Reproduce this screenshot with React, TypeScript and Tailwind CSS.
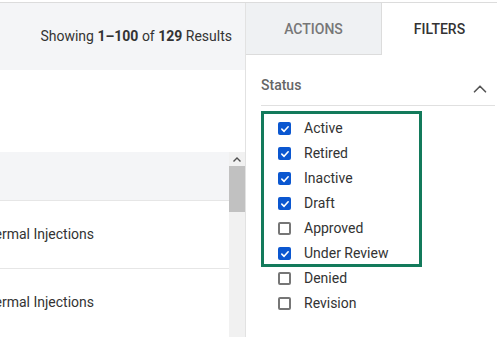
import { ChevronUp } from 'lucide-react';

const statuses = [
  { label: 'Active', checked: true },
  { label: 'Retired', checked: true },
  { label: 'Inactive', checked: true },
  { label: 'Draft', checked: true },
  { label: 'Approved', checked: false },
  { label: 'Under Review', checked: true },
];

const extraStatuses = [
  { label: 'Denied', checked: false },
  { label: 'Revision', checked: false },
];

function Checkbox({ checked }: { checked: boolean }) {
  if (checked) {
    return (
      <span className="flex h-[13px] w-[13px] items-center justify-center rounded-[2px] bg-[#0b57d0]">
        <svg viewBox="0 0 12 12" className="h-[10px] w-[10px]">
          <path d="M2.2 6.2 L4.9 8.8 L9.8 3.4" fill="none" stroke="#fff" strokeWidth="1.9" strokeLinecap="round" strokeLinejoin="round" />
        </svg>
      </span>
    );
  }
  return <span className="h-[13px] w-[13px] rounded-[2px] border-2 border-[#767676] bg-white" />;
}

function StatusRow({ label, checked }: { label: string; checked: boolean }) {
  return (
    <label className="flex h-[25px] items-center gap-[13px]">
      <Checkbox checked={checked} />
      <span className="text-[14px] text-[#333]">{label}</span>
    </label>
  );
}

export default function App() {
  return (
    <div className="flex h-[337px] w-[497px] overflow-hidden bg-white pt-[2px] font-['Roboto',sans-serif]">
      <div className="flex w-full border-t border-[#dcdcdc]">
        {/* Results */}
        <div className="flex w-[245px] flex-shrink-0 flex-col">
          <div className="flex h-[67px] items-center justify-end bg-[#f4f5f7] pr-[13px] text-[14px] text-[#333]">
            Showing&nbsp;<b className="font-bold">1–100</b>&nbsp;of&nbsp;<b className="font-bold">129</b>&nbsp;Results
          </div>
          <div className="h-[82px]" />
          <div className="flex flex-1">
            <div className="flex w-[229px] flex-col">
              <div className="h-[48px] bg-[#f4f5f7]" />
              {[0, 1].map((i) => (
                <div key={i} className="flex h-[68px] items-center border-t border-[#e6e6e6]">
                  <div className="flex w-[94px] justify-end overflow-hidden whitespace-nowrap text-[14px] text-[#333]">
                    Intradermal Injections
                  </div>
                </div>
              ))}
            </div>
            {/* Scrollbar */}
            <div className="flex w-[16px] flex-col bg-[#f1f1f1]">
              <div className="flex h-[14px] items-center justify-center">
                <svg viewBox="0 0 8 5" className="h-[5px] w-[8px]">
                  <path d="M0.5 4.5 L4 1 L7.5 4.5" fill="none" stroke="#505050" strokeWidth="1.4" />
                </svg>
              </div>
              <div className="h-[46px] bg-[#c1c1c1]" />
            </div>
          </div>
        </div>

        {/* Side panel */}
        <div className="flex flex-1 flex-col border-l border-[#e2e2e2]">
          <div className="flex h-[52px]">
            <div className="flex w-[136px] items-center justify-center border-b border-r border-[#dcdcdc] bg-[#eff1f3] pt-[1px] text-[14px] font-medium text-[#777]">
              ACTIONS
            </div>
            <div className="flex flex-1 items-center justify-center pt-[1px] text-[14px] font-medium text-[#333]">
              FILTERS
            </div>
          </div>
          <div className="pl-[15px] pr-[2px]">
            <div className="flex h-[51px] items-center justify-between border-b border-[#e0e0e0] pt-[11px]">
              <span className="text-[14px] font-medium text-[#666]">Status</span>
              <ChevronUp className="mr-[4px] mt-[6px] h-[22px] w-[22px] text-[#555]" strokeWidth={1.8} />
            </div>
            <div className="mt-[5px] h-[156px] w-[161px] border-[3px] border-[#137a5b] pl-[14px] pt-[2px]">
              {statuses.map((s) => (
                <StatusRow key={s.label} {...s} />
              ))}
            </div>
            <div className="-mt-[1px] pl-[17px]">
              {extraStatuses.map((s) => (
                <StatusRow key={s.label} {...s} />
              ))}
            </div>
          </div>
        </div>
      </div>
    </div>
  );
}
